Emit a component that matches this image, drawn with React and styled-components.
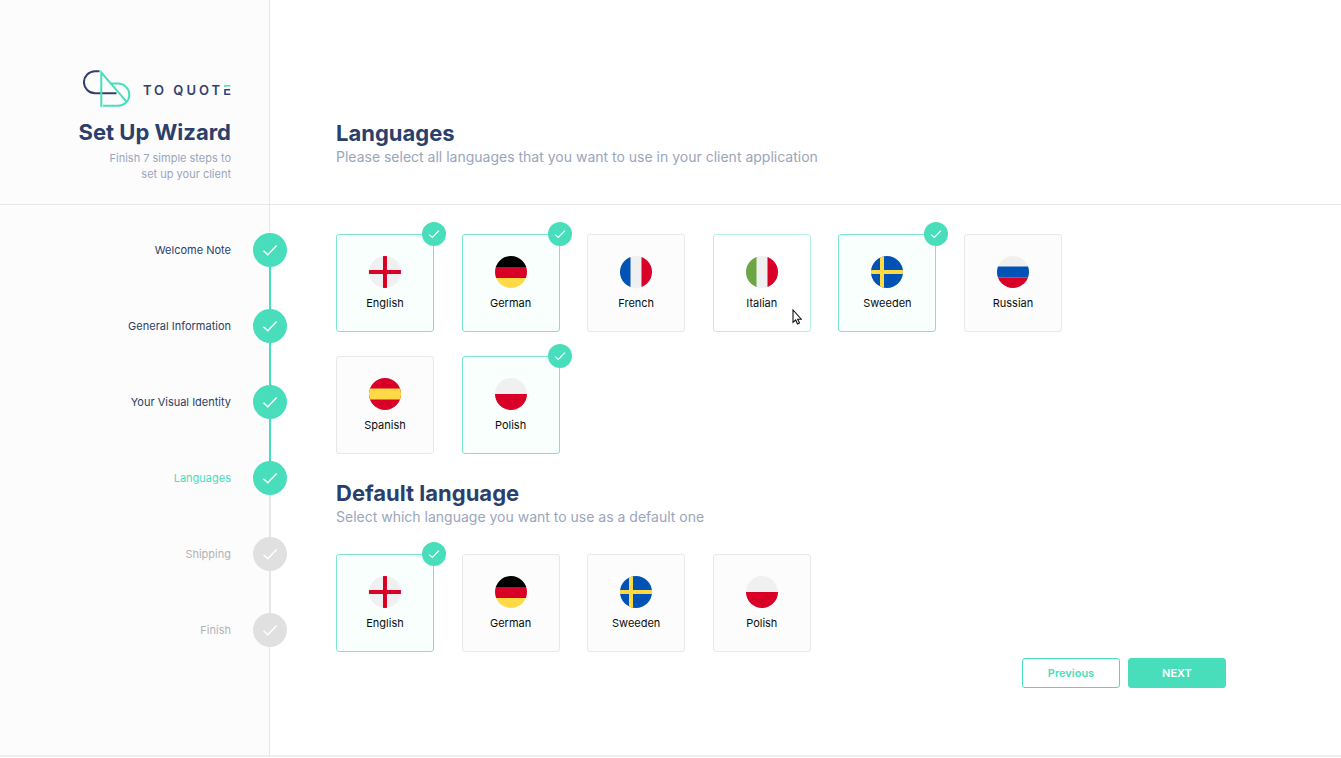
import React, { useState } from "react";
import styled, { createGlobalStyle, css } from "styled-components";

const c = {
  green: "#49debb",
  navy: "#2a406b",
  logoNavy: "#343f71",
  muted: "#9aa5bd",
  line: "#e6e6e6",
  off: "#e0e0e0",
};

const GlobalStyle = createGlobalStyle`
  *, *::before, *::after { box-sizing: border-box; }
  body {
    margin: 0;
    background: #fff;
    font-family: Inter, "Liberation Sans", sans-serif;
  }
`;

const Page = styled.div`
  display: grid;
  grid-template-columns: 270px 1fr;
  grid-template-rows: auto 1fr;
  min-height: calc(100vh - 1px);
  border-bottom: 2px solid #eee;
`;

const Brand = styled.header`
  display: flex;
  flex-direction: column;
  align-items: flex-end;
  padding: 70px 38px 22px 0;
  background: #fcfcfc;
  border-right: 1px solid ${c.line};
  border-bottom: 1px solid ${c.line};
  text-align: right;
`;

const Logo = styled.div`
  display: flex;
  align-items: center;
  gap: 12px;
  height: 38px;
  margin-bottom: 10px;
`;

const Wordmark = styled.span`
  font-size: 13px;
  font-weight: 600;
  line-height: 18px;
  letter-spacing: 3px;
  color: ${c.logoNavy};
  margin-top: 2px;
  margin-right: -3px;
`;

const TwoToneLetter = styled.span`
  background: linear-gradient(${c.green} 5px, transparent 5px, transparent 7px, ${c.logoNavy} 7px);
  background-clip: text;
  color: transparent;
`;

const Title = styled.h1`
  margin: 0;
  font-size: 22px;
  font-weight: 700;
  line-height: 28px;
  color: ${c.navy};
`;

const Heading = styled(Title).attrs({ as: "h2" })``;

const Tagline = styled.p`
  margin: 4px 0 0;
  font-size: 11px;
  line-height: 16px;
  color: ${c.muted};
`;

const Lead = styled.p`
  margin: 0;
  font-size: 14px;
  line-height: 20px;
  color: ${c.muted};
`;

const Intro = styled.div`
  display: flex;
  flex-direction: column;
  justify-content: flex-end;
  padding: 0 66px 37px;
  border-bottom: 1px solid ${c.line};
`;

const Sidebar = styled.nav`
  padding: 28px 0 32px;
  background: #fcfcfc;
  border-right: 1px solid ${c.line};
`;

const Steps = styled.ol`
  display: flex;
  flex-direction: column;
  gap: 42px;
  margin: 0 -18px 0 0;
  padding: 0;
  list-style: none;
`;

const StepItem = styled.li`
  position: relative;

  &:not(:last-child)::after {
    content: "";
    position: absolute;
    top: 34px;
    right: 16px;
    width: 2px;
    height: 42px;
    background: ${(p) => (p.$linked ? c.green : c.line)};
  }
`;

const stepColor = { done: c.navy, current: c.green, todo: "#b3b3b3" };

const StepLink = styled.a`
  display: flex;
  align-items: center;
  justify-content: flex-end;
  gap: 22px;
  font-size: 11px;
  line-height: 16px;
  color: ${(p) => stepColor[p.$state]};
  text-decoration: none;
`;

const StepDot = styled.span`
  display: grid;
  place-items: center;
  width: 34px;
  height: 34px;
  border-radius: 50%;
  background: ${(p) => (p.$state === "todo" ? c.off : c.green)};
`;

const Main = styled.main`
  padding: 29px 115px 32px 66px;
`;

const Group = styled.fieldset`
  min-width: 0;
  margin: 0;
  padding: 0;
  border: 0;
`;

const Tiles = styled.div`
  display: grid;
  grid-template-columns: repeat(auto-fill, 98px);
  justify-content: space-between;
  gap: 24px;
  max-width: 726px;
`;

const tileLook = {
  selected: css`
    background: #f8fffd;
    border-color: #7be6cd;
  `,
  hover: css`
    background: #fff;
    border-color: #b4f1e2;
  `,
  plain: css`
    background: #fcfcfc;
    border-color: #e8e8e8;
  `,
};

const Tile = styled.label`
  position: relative;
  display: flex;
  flex-direction: column;
  align-items: center;
  gap: 7px;
  height: 98px;
  padding-top: 21px;
  border: 1px solid;
  border-radius: 3px;
  font-size: 11px;
  line-height: 16px;
  color: #0c0c0c;
  cursor: pointer;
  ${(p) => tileLook[p.$look]}
`;

const HiddenInput = styled.input`
  position: absolute;
  inset: 0;
  width: 100%;
  height: 100%;
  margin: 0;
  opacity: 0;
  cursor: pointer;
`;

const Badge = styled.span`
  position: absolute;
  top: -13px;
  right: -13px;
  display: grid;
  place-items: center;
  width: 24px;
  height: 24px;
  border-radius: 50%;
  background: ${c.green};
`;

const Pointer = styled.svg`
  position: absolute;
  right: 8px;
  bottom: 6px;
`;

const SectionHead = styled.div`
  padding: 25px 0 27px;
`;

const Actions = styled.div`
  display: flex;
  justify-content: flex-end;
  gap: 8px;
  margin-top: 6px;
`;

const Button = styled.button`
  width: 98px;
  height: 30px;
  padding: 0;
  border: 1px solid ${c.green};
  border-radius: 3px;
  font: 600 11px/16px Inter, "Liberation Sans", sans-serif;
  color: ${(p) => (p.$primary ? "#fff" : c.green)};
  background: ${(p) => (p.$primary ? c.green : "#fff")};
  cursor: pointer;
`;

const Check = ({ size, weight }) => (
  <svg width={size} height={size} viewBox="0 0 16 16" fill="none" stroke="#fff" strokeWidth={weight} aria-hidden="true">
    <path d="M1.5 8.8 5.8 12.7 14.6 3.6" />
  </svg>
);

const flags = {
  English: (
    <>
      <rect width="32" height="32" fill="#f0f0f0" />
      <path d="M14 0h4v14h14v4H18v14h-4V18H0v-4h14z" fill="#d80027" />
    </>
  ),
  German: (
    <>
      <rect width="32" height="11" fill="#000" />
      <rect y="11" width="32" height="11" fill="#d80027" />
      <rect y="22" width="32" height="10" fill="#ffda44" />
    </>
  ),
  French: (
    <>
      <rect width="32" height="32" fill="#f0f0f0" />
      <rect width="10.5" height="32" fill="#0052b4" />
      <rect x="21.5" width="10.5" height="32" fill="#d80027" />
    </>
  ),
  Italian: (
    <>
      <rect width="32" height="32" fill="#f0f0f0" />
      <rect width="10.5" height="32" fill="#6da544" />
      <rect x="21.5" width="10.5" height="32" fill="#d80027" />
    </>
  ),
  Sweeden: (
    <>
      <rect width="32" height="32" fill="#0052b4" />
      <path d="M9 0h4v14h19v4H13v14H9V18H0v-4h9z" fill="#ffda44" />
    </>
  ),
  Russian: (
    <>
      <rect width="32" height="32" fill="#f0f0f0" />
      <rect y="10.5" width="32" height="11" fill="#0052b4" />
      <rect y="21.5" width="32" height="10.5" fill="#d80027" />
    </>
  ),
  Spanish: (
    <>
      <rect width="32" height="32" fill="#d80027" />
      <rect y="10.5" width="32" height="11" fill="#ffda44" />
    </>
  ),
  Polish: (
    <>
      <rect width="32" height="16" fill="#f0f0f0" />
      <rect y="16" width="32" height="16" fill="#d80027" />
    </>
  ),
};

const FlagSvg = styled.svg`
  display: block;
  border-radius: 50%;
`;

const Flag = ({ name }) => (
  <FlagSvg width="32" height="32" viewBox="0 0 32 32" aria-hidden="true">
    {flags[name]}
  </FlagSvg>
);

const LogoMark = () => (
  <svg width="48" height="38" viewBox="0 0 48 38" fill="none" strokeWidth="2" aria-hidden="true">
    <path d="M16.5 1.2H12A11 11 0 0 0 12 23.3h21.5" stroke={c.logoNavy} />
    <path d="M18.3 37V2.5L43.3 31.3M28 13.6h7.2a11 11 0 0 1 0 22.2H20" stroke={c.green} />
  </svg>
);

const LanguageTile = ({ name, type, group, checked, hovered, onChange }) => (
  <Tile $look={checked ? "selected" : hovered ? "hover" : "plain"}>
    <HiddenInput type={type} name={group} value={name} checked={checked} onChange={onChange} />
    <Flag name={name} />
    {name}
    {checked && (
      <Badge>
        <Check size={12} weight="1.6" />
      </Badge>
    )}
    {hovered && (
      <Pointer width="10" height="16" viewBox="0 0 10 16" aria-hidden="true">
        <path d="M1 1v12.4l2.7-2.4 1.8 4 2-.9-1.8-3.9h3.6z" fill="#fff" stroke="#111" strokeWidth="1.1" />
      </Pointer>
    )}
  </Tile>
);

const steps = [
  ["Welcome Note", "done"],
  ["General Information", "done"],
  ["Your Visual Identity", "done"],
  ["Languages", "current"],
  ["Shipping", "todo"],
  ["Finish", "todo"],
];

const languages = ["English", "German", "French", "Italian", "Sweeden", "Russian", "Spanish", "Polish"];

export default function App() {
  const [selected, setSelected] = useState(["English", "German", "Sweeden", "Polish"]);
  const [fallback, setFallback] = useState("English");

  const toggle = (name) =>
    setSelected((now) => (now.includes(name) ? now.filter((n) => n !== name) : [...now, name]));

  return (
    <>
      <GlobalStyle />
      <Page>
        <Brand>
          <Logo>
            <LogoMark />
            <Wordmark>
              TO QUOT<TwoToneLetter>E</TwoToneLetter>
            </Wordmark>
          </Logo>
          <Title>Set Up Wizard</Title>
          <Tagline>
            Finish 7 simple steps to
            <br />
            set up your client
          </Tagline>
        </Brand>
        <Intro>
          <Heading id="languages">Languages</Heading>
          <Lead>Please select all languages that you want to use in your client application</Lead>
        </Intro>
        <Sidebar aria-label="Setup steps">
          <Steps>
            {steps.map(([label, state]) => (
              <StepItem key={label} $linked={state === "done"}>
                <StepLink href="#" $state={state} aria-current={state === "current" ? "step" : undefined}>
                  {label}
                  <StepDot $state={state}>
                    <Check size={16} weight="1.5" />
                  </StepDot>
                </StepLink>
              </StepItem>
            ))}
          </Steps>
        </Sidebar>
        <Main>
          <Group aria-labelledby="languages">
            <Tiles>
              {languages.map((name) => (
                <LanguageTile
                  key={name}
                  name={name}
                  type="checkbox"
                  group="languages"
                  checked={selected.includes(name)}
                  hovered={name === "Italian"}
                  onChange={() => toggle(name)}
                />
              ))}
            </Tiles>
          </Group>
          <SectionHead>
            <Heading id="default-language">Default language</Heading>
            <Lead>Select which language you want to use as a default one</Lead>
          </SectionHead>
          <Group aria-labelledby="default-language">
            <Tiles>
              {languages
                .filter((name) => selected.includes(name))
                .map((name) => (
                  <LanguageTile
                    key={name}
                    name={name}
                    type="radio"
                    group="default-language"
                    checked={fallback === name}
                    onChange={() => setFallback(name)}
                  />
                ))}
            </Tiles>
          </Group>
          <Actions>
            <Button type="button">Previous</Button>
            <Button type="button" $primary>
              NEXT
            </Button>
          </Actions>
        </Main>
      </Page>
    </>
  );
}
